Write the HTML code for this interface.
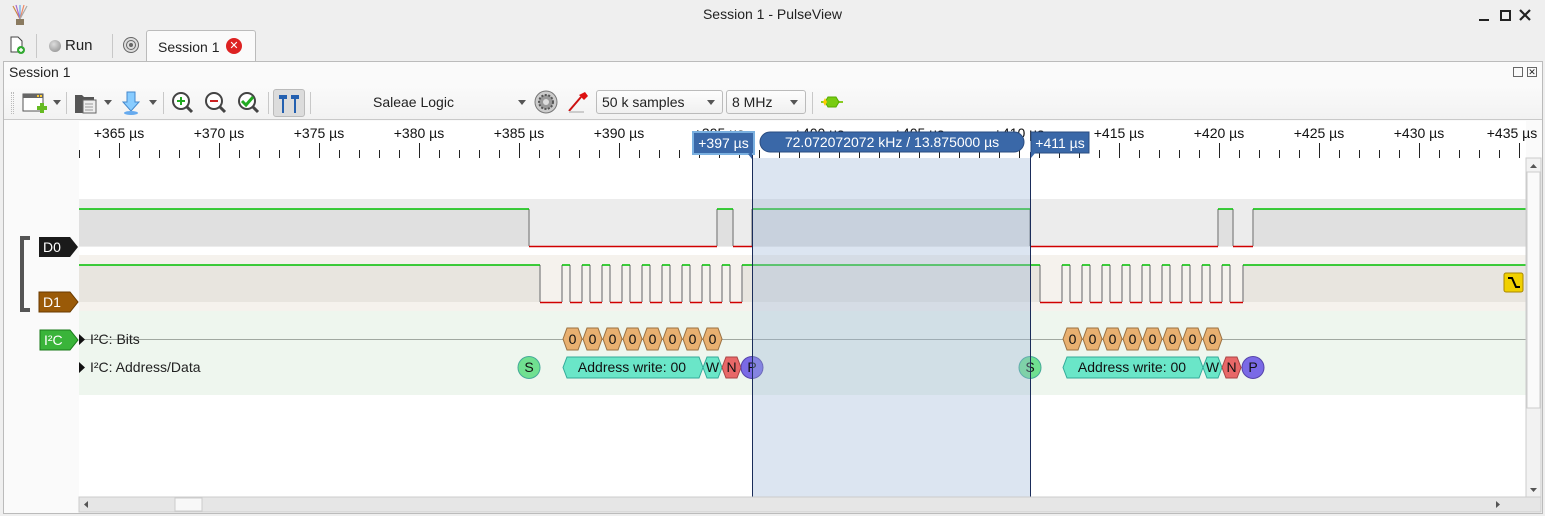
<!DOCTYPE html>
<html><head><meta charset="utf-8"><style>
*{box-sizing:border-box;margin:0;padding:0}
body{width:1545px;height:516px;overflow:hidden;background:#efefef;font-family:"Liberation Sans","DejaVu Sans",sans-serif;font-size:14px;color:#222;position:relative}
.a{position:absolute}
.sep{position:absolute;width:1px;background:#c8c8c8}
.combo{position:absolute;height:24px;border:1px solid #bbb;border-radius:3px;background:linear-gradient(#fdfdfd,#f0f0f0);font-size:14px;line-height:22px;padding-left:5px}
.combo:after{content:"";position:absolute;right:7px;top:9px;border:4px solid transparent;border-top:5px solid #555}
.dd{position:absolute;border:4px solid transparent;border-top:5px solid #555}
</style></head><body>
<svg class="a" style="left:10px;top:4px" width="20" height="22" viewBox="0 0 20 22"><g stroke-width="1.2"><path d="M10 15 L3 2" stroke="#c84"/><path d="M10 15 L6 1" stroke="#a6c"/><path d="M10 15 L10 1" stroke="#6ae"/><path d="M10 15 L14 1" stroke="#e86"/><path d="M10 15 L17 2" stroke="#aaa"/></g><rect x="6" y="15" width="8" height="6" fill="#8a7a60"/></svg>
<div class="a" style="left:0;top:6px;width:1545px;text-align:center;font-size:14px">Session 1 - PulseView</div>
<div class="a" style="left:1479px;top:19px;width:10px;height:2px;background:#222"></div>
<div class="a" style="left:1500px;top:10px;width:11px;height:11px;border:2px solid #222"></div>
<svg class="a" style="left:1519px;top:9px" width="12" height="12"><path d="M1 1L11 11M11 1L1 11" stroke="#222" stroke-width="2.2"/></svg>
<svg class="a" style="left:9px;top:36px" width="16" height="18"><path d="M2 1 H9 L13 5 V16 H2 Z" fill="#fff" stroke="#444"/><circle cx="12" cy="14" r="4" fill="#3a3"/><path d="M10 14h4M12 12v4" stroke="#fff" stroke-width="1.4"/></svg>
<div class="sep" style="left:36px;top:34px;height:24px"></div>
<div class="a" style="left:49px;top:40px;width:12px;height:12px;border-radius:50%;background:radial-gradient(circle at 40% 35%,#ddd,#888)"></div>
<div class="a" style="left:65px;top:37px;font-size:15px">Run</div>
<div class="sep" style="left:112px;top:34px;height:24px"></div>
<svg class="a" style="left:122px;top:36px" width="18" height="18"><circle cx="9" cy="9" r="7.5" fill="#ddd" stroke="#666"/><circle cx="9" cy="9" r="4.5" fill="none" stroke="#666"/><circle cx="9" cy="9" r="2" fill="#666"/></svg>
<div class="a" style="left:146px;top:30px;width:110px;height:32px;background:#fafafa;border:1px solid #bbb;border-bottom:none;border-radius:3px 3px 0 0"></div>
<div class="a" style="left:158px;top:39px;font-size:14px">Session 1</div>
<div class="a" style="left:226px;top:38px;width:16px;height:16px;border-radius:50%;background:#d22;color:#fff;font-size:11px;font-weight:bold;text-align:center;line-height:16px">✕</div>
<div class="a" style="left:3px;top:61px;width:1540px;height:453px;background:#fafafa;border:1px solid #bbb"></div>
<div class="a" style="left:9px;top:64px;font-size:14px">Session 1</div>
<div class="a" style="left:1513px;top:67px;width:10px;height:10px;border:1px solid #666;font-size:7px"></div>
<div class="a" style="left:1527px;top:67px;width:10px;height:10px;border:1px solid #666;font-size:9px;line-height:8px;text-align:center">✕</div>
<div class="a" style="left:4px;top:86px;width:1538px;height:34px;background:linear-gradient(#fafafa,#f2f2f2);border-bottom:1px solid #c9c9c9"></div>
<div class="a" style="left:11px;top:92px;width:3px;height:22px;border-left:1px dotted #bbb;border-right:1px dotted #bbb"></div>
<svg class="a" style="left:22px;top:91px" width="28" height="24"><rect x="1" y="3" width="20" height="17" fill="#fff" stroke="#555"/><rect x="1" y="3" width="20" height="4" fill="#666"/><rect x="15" y="4" width="2" height="2" fill="#fc3"/><rect x="18" y="4" width="2" height="2" fill="#fc3"/><path d="M20 12v10M15 17h10" stroke="#6b2" stroke-width="4"/></svg>
<div class="dd" style="left:53px;top:100px"></div>
<div class="sep" style="left:66px;top:92px;height:22px"></div>
<svg class="a" style="left:74px;top:91px" width="26" height="24"><path d="M1 4 H8 L10 6 H20 V22 H1Z" fill="#555"/><rect x="9" y="9" width="13" height="13" fill="#eee" stroke="#666"/><path d="M11 13h8M11 16h8M11 19h8" stroke="#999"/></svg>
<div class="dd" style="left:104px;top:100px"></div>
<svg class="a" style="left:121px;top:90px" width="20" height="26"><path d="M6 2 H14 V12 H18 L10 21 L2 12 H6Z" fill="#8cf" stroke="#48c"/><ellipse cx="10" cy="23" rx="7" ry="2" fill="#6ae"/></svg>
<div class="dd" style="left:149px;top:100px"></div>
<div class="sep" style="left:163px;top:92px;height:22px"></div>
<svg class="a" style="left:171px;top:90px" width="100" height="26"><g stroke="#444" stroke-width="2" fill="#fff"><circle cx="10" cy="11" r="8"/><path d="M16 17l5 5" stroke-width="3"/><circle cx="43" cy="11" r="8"/><path d="M49 17l5 5" stroke-width="3"/><circle cx="76" cy="11" r="8"/><path d="M82 17l5 5" stroke-width="3"/></g><path d="M6 11h8M10 7v8" stroke="#2a2" stroke-width="2"/><path d="M39 11h8" stroke="#c22" stroke-width="2"/><path d="M71 11l4 4 7-8" stroke="#2a2" stroke-width="3" fill="none"/></svg>
<div class="sep" style="left:268px;top:92px;height:22px"></div>
<div class="a" style="left:273px;top:89px;width:32px;height:28px;background:#dcdcdc;border:1px solid #bbb;border-radius:3px"></div>
<svg class="a" style="left:277px;top:92px" width="24" height="22"><path d="M2 3h8v4H7v14H5V7H2z M14 3h8v4h-3v14h-2V7h-3z" fill="#2460b0"/></svg>
<div class="sep" style="left:310px;top:92px;height:22px"></div>
<div class="a" style="left:373px;top:94px;font-size:14px">Saleae Logic</div>
<div class="dd" style="left:518px;top:100px"></div>
<svg class="a" style="left:534px;top:90px" width="24" height="24"><circle cx="12" cy="12" r="11" fill="#ccc" stroke="#777"/><circle cx="12" cy="12" r="7" fill="#999" stroke="#555" stroke-dasharray="2 1.5" stroke-width="2"/><circle cx="12" cy="12" r="3" fill="#ddd"/></svg>
<svg class="a" style="left:566px;top:90px" width="26" height="24"><path d="M3 21 L15 7" stroke="#c11" stroke-width="2"/><path d="M13 5 L19 2 L22 6 L18 10Z" fill="#d11"/><path d="M3 22 H18" stroke="#ccc" stroke-width="2"/></svg>
<div class="combo" style="left:596px;top:90px;width:127px">50 k samples</div>
<div class="combo" style="left:726px;top:90px;width:80px">8 MHz</div>
<div class="sep" style="left:812px;top:92px;height:22px"></div>
<svg class="a" style="left:820px;top:95px" width="24" height="14"><path d="M1 7h22" stroke="#8c2" stroke-width="2"/><path d="M5 7l3-5h8l3 5-3 5H8z" fill="#7c1" stroke="#5a0"/><path d="M3 7l2-4 2 4-2 4z" fill="#fc0"/></svg>
<div class="a" style="left:4px;top:121px;width:75px;height:376px;background:#fafafa"></div>
<svg class="a" style="left:0;top:121px" width="1545" height="395" viewBox="0 121 1545 395">
<rect x="79" y="121" width="1447" height="376" fill="#fff"/>
<path stroke="#222" stroke-width="1" d="M79.5 150v8M99.5 150v8M119.5 143v15M139.5 150v8M159.5 150v8M179.5 150v8M199.5 150v8M219.5 143v15M239.5 150v8M259.5 150v8M279.5 150v8M299.5 150v8M319.5 143v15M339.5 150v8M359.5 150v8M379.5 150v8M399.5 150v8M419.5 143v15M439.5 150v8M459.5 150v8M479.5 150v8M499.5 150v8M519.5 143v15M539.5 150v8M559.5 150v8M579.5 150v8M599.5 150v8M619.5 143v15M639.5 150v8M659.5 150v8M679.5 150v8M699.5 150v8M719.5 143v15M739.5 150v8M759.5 150v8M779.5 150v8M799.5 150v8M819.5 143v15M839.5 150v8M859.5 150v8M879.5 150v8M899.5 150v8M919.5 143v15M939.5 150v8M959.5 150v8M979.5 150v8M999.5 150v8M1019.5 143v15M1039.5 150v8M1059.5 150v8M1079.5 150v8M1099.5 150v8M1119.5 143v15M1139.5 150v8M1159.5 150v8M1179.5 150v8M1199.5 150v8M1219.5 143v15M1239.5 150v8M1259.5 150v8M1279.5 150v8M1299.5 150v8M1319.5 143v15M1339.5 150v8M1359.5 150v8M1379.5 150v8M1399.5 150v8M1419.5 143v15M1439.5 150v8M1459.5 150v8M1479.5 150v8M1499.5 150v8M1519.5 143v15"/>
<g font-family="Liberation Sans,sans-serif" font-size="14" fill="#111" text-anchor="middle">
<text x="119" y="138">+365 µs</text><text x="219" y="138">+370 µs</text><text x="319" y="138">+375 µs</text><text x="419" y="138">+380 µs</text><text x="519" y="138">+385 µs</text><text x="619" y="138">+390 µs</text><text x="719" y="138">+395 µs</text><text x="819" y="138">+400 µs</text><text x="919" y="138">+405 µs</text><text x="1019" y="138">+410 µs</text><text x="1119" y="138">+415 µs</text><text x="1219" y="138">+420 µs</text><text x="1319" y="138">+425 µs</text><text x="1419" y="138">+430 µs</text><text x="1512" y="138">+435 µs</text></g>
<rect x="79" y="199" width="1447" height="48" fill="#ececec"/>
<g fill="#e0e0e0"><rect x="79" y="209" width="450" height="37"/><rect x="717" y="209" width="16" height="37"/><rect x="752" y="209" width="278" height="37"/><rect x="1218" y="209" width="15" height="37"/><rect x="1253" y="209" width="273" height="37"/></g>
<path d="M529 209V246M717 209V246M733 209V246M752 209V246M1030 209V246M1218 209V246M1233 209V246M1253 209V246" stroke="#999" stroke-width="1.6"/>
<path d="M79 209H529M717 209H733M752 209H1030M1218 209H1233M1253 209H1526" stroke="#00c000" stroke-width="1.6"/>
<path d="M529 246.5H717M733 246.5H752M1030 246.5H1218M1233 246.5H1253" stroke="#d00000" stroke-width="1.6"/>
<rect x="79" y="255" width="1447" height="56" fill="#f5f2ed"/>
<g fill="#e8e5df"><rect x="79" y="265" width="461" height="37"/><rect x="742" y="265" width="298" height="37"/><rect x="1243" y="265" width="283" height="37"/></g>
<path fill="none" stroke="#999" stroke-width="1.6" d="M540 265V302M562 302V265M570 265V302M582 302V265M590 265V302M602 302V265M610 265V302M622 302V265M630 265V302M642 302V265M650 265V302M662 302V265M670 265V302M682 302V265M690 265V302M702 302V265M710 265V302M722 302V265M730 265V302M742 302V265 M1040 265V302M1062 302V265M1070 265V302M1082 302V265M1090 265V302M1102 302V265M1110 265V302M1122 302V265M1130 265V302M1142 302V265M1150 265V302M1162 302V265M1170 265V302M1182 302V265M1190 265V302M1202 302V265M1210 265V302M1222 302V265M1230 265V302M1243 302V265"/>
<path stroke="#00c000" stroke-width="1.6" d="M79 265H540M562 265H570M582 265H590M602 265H610M622 265H630M642 265H650M662 265H670M682 265H690M702 265H710M722 265H730M742 265H1040M1062 265H1070M1082 265H1090M1102 265H1110M1122 265H1130M1142 265H1150M1162 265H1170M1182 265H1190M1202 265H1210M1222 265H1230M1243 265H1526"/>
<path stroke="#d00000" stroke-width="1.6" d="M540 302.5H562M570 302.5H582M590 302.5H602M610 302.5H622M630 302.5H642M650 302.5H662M670 302.5H682M690 302.5H702M710 302.5H722M730 302.5H742M1040 302.5H1062M1070 302.5H1082M1090 302.5H1102M1110 302.5H1122M1130 302.5H1142M1150 302.5H1162M1170 302.5H1182M1190 302.5H1202M1210 302.5H1222M1230 302.5H1243"/>
<rect x="1504" y="273" width="19" height="19" rx="2" fill="#f0d000" stroke="#a80"/>
<path d="M1508 278H1512L1516 287H1520" stroke="#000" stroke-width="2" fill="none"/>
<rect x="79" y="311" width="1447" height="84" fill="#eef6ee"/>
<path d="M79 339.5H1526" stroke="#a0a8a0"/>
<defs><path id="hx" d="M0 0L4 -11H15L19 0L15 11H4Z" fill="#e8b070" stroke="#9a7040"/></defs>
<g font-family="Liberation Sans,sans-serif" font-size="14" fill="#111" text-anchor="middle">
<use href="#hx" x="563" y="339"/><use href="#hx" x="583" y="339"/><use href="#hx" x="603" y="339"/><use href="#hx" x="623" y="339"/><use href="#hx" x="643" y="339"/><use href="#hx" x="663" y="339"/><use href="#hx" x="683" y="339"/><use href="#hx" x="703" y="339"/>
<text x="572.5" y="344">0</text><text x="592.5" y="344">0</text><text x="612.5" y="344">0</text><text x="632.5" y="344">0</text><text x="652.5" y="344">0</text><text x="672.5" y="344">0</text><text x="692.5" y="344">0</text><text x="712.5" y="344">0</text>
<use href="#hx" x="1063" y="339"/><use href="#hx" x="1083" y="339"/><use href="#hx" x="1103" y="339"/><use href="#hx" x="1123" y="339"/><use href="#hx" x="1143" y="339"/><use href="#hx" x="1163" y="339"/><use href="#hx" x="1183" y="339"/><use href="#hx" x="1203" y="339"/>
<text x="1072.5" y="344">0</text><text x="1092.5" y="344">0</text><text x="1112.5" y="344">0</text><text x="1132.5" y="344">0</text><text x="1152.5" y="344">0</text><text x="1172.5" y="344">0</text><text x="1192.5" y="344">0</text><text x="1212.5" y="344">0</text>
<circle cx="529" cy="367.5" r="11" fill="#70e090" stroke="#4a9"/><text x="529" y="372">S</text>
<path d="M563 367.5L567 357H699L703 367.5L699 378H567Z" fill="#6ae6c8" stroke="#3a9"/><text x="632" y="372">Address write: 00</text>
<path d="M703 367.5L707 357H718L722 367.5L718 378H707Z" fill="#6ae6c8" stroke="#3a9"/><text x="712.5" y="372">W</text>
<path d="M722 367.5L726 357H737L741 367.5L737 378H726Z" fill="#e86868" stroke="#a44"/><text x="731.5" y="372">N</text>
<circle cx="752" cy="367.5" r="11" fill="#7a6ae6" stroke="#54a"/><text x="752" y="372">P</text>
<circle cx="1030" cy="367.5" r="11" fill="#70e090" stroke="#4a9"/><text x="1030" y="372">S</text>
<path d="M1063 367.5L1067 357H1199L1203 367.5L1199 378H1067Z" fill="#6ae6c8" stroke="#3a9"/><text x="1132" y="372">Address write: 00</text>
<path d="M1203 367.5L1207 357H1218L1222 367.5L1218 378H1207Z" fill="#6ae6c8" stroke="#3a9"/><text x="1212.5" y="372">W</text>
<path d="M1222 367.5L1226 357H1237L1241 367.5L1237 378H1226Z" fill="#e86868" stroke="#a44"/><text x="1231.5" y="372">N</text>
<circle cx="1253" cy="367.5" r="11" fill="#7a6ae6" stroke="#54a"/><text x="1253" y="372">P</text>
</g>
<rect x="752" y="158" width="278" height="339" fill="#9ab4d8" fill-opacity="0.35"/>
<path d="M752.5 152V497M1030.5 152V497" stroke="#1a2c5a"/>
<rect x="693" y="132" width="61" height="22" fill="#3a68a8" stroke="#7ab0e0" stroke-width="2"/>
<path d="M748 154L752 159V152Z" fill="#3a68a8"/>
<rect x="760" y="132" width="264" height="20" rx="10" fill="#3a68a8" stroke="#2a4c80"/>
<rect x="1031" y="132" width="58" height="21" fill="#3a68a8" stroke="#2a4c80"/>
<path d="M1031 152L1031 158L1036 152Z" fill="#3a68a8"/>
<g font-family="Liberation Sans,sans-serif" font-size="14" fill="#fff" text-anchor="middle"><text x="723.5" y="148">+397 µs</text><text x="892" y="147">72.072072072 kHz / 13.875000 µs</text><text x="1060" y="148">+411 µs</text></g>
<path d="M30 238H22V310H30" stroke="#555" stroke-width="4" fill="none"/>
<path d="M39 237H70L78 247L70 257H39Z" fill="#1a1a1a"/>
<path d="M39 292H70L78 302L70 312H39Z" fill="#9a5a08" stroke="#6a3a00"/>
<path d="M40 330H70L78 340L70 350H40Z" fill="#3ab43a" stroke="#1a7a1a"/>
<path d="M79 334V345L85 339.5Z M79 362V373L85 367.5Z" fill="#111"/>
<g font-family="Liberation Sans,sans-serif" font-size="14"><text x="43" y="252" fill="#fff">D0</text><text x="43" y="307" fill="#fff">D1</text><text x="44" y="345" fill="#fff">I²C</text>
<text x="90" y="344" fill="#222">I²C: Bits</text><text x="90" y="372" fill="#222">I²C: Address/Data</text></g>
<rect x="1526" y="158" width="15" height="339" fill="#f2f2f2" stroke="#ccc"/>
<rect x="1527" y="172" width="13" height="236" fill="#fafafa" stroke="#ccc"/>
<path d="M1530 168L1533.5 164L1537 168Z M1530 488L1533.5 492L1537 488Z" fill="#555"/>
<rect x="79" y="497" width="1462" height="15" fill="#e6e6e6" stroke="#ccc"/>
<rect x="175" y="498" width="27" height="13" fill="#f8f8f8" stroke="#ccc"/>
<path d="M88 501V508L84 504.5Z M1496 501V508L1500 504.5Z" fill="#555"/>
</svg>
</body></html>
